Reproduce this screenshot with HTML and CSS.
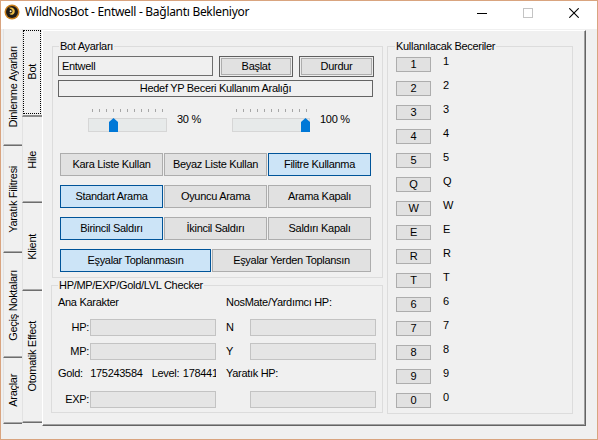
FILE: index.html
```html
<!DOCTYPE html>
<html lang="tr">
<head>
<meta charset="utf-8">
<title>WildNosBot</title>
<link rel="stylesheet" href="styles.css">
</head>
<body>
<div class="window">
  <header class="titlebar">
    <svg class="app-icon" viewBox="0 0 16 16" width="16" height="16">
      <circle cx="8" cy="8" r="7.5" fill="#c9801f"/>
      <circle cx="8" cy="8" r="6" fill="#1f1b17"/>
      <path d="M5 3.8 C8.5 2.8 11.6 5.2 10.6 8.4 C9.6 11.4 6.2 11.6 5.4 9.2 C7.2 10.2 9.2 8.4 8.3 6.3 C7.8 5.2 6.3 4.8 5 3.8Z" fill="#f0bf45"/>
      <circle cx="6.6" cy="7.2" r="1" fill="#fff3c8"/>
    </svg>
    <span class="title">WildNosBot - Entwell - Bağlantı Bekleniyor</span>
    <div class="caption">
      <span class="cap"><svg width="10" height="10" viewBox="0 0 10 10"><path d="M0 5.5H10" stroke="#000" stroke-width="1"/></svg></span>
      <span class="cap"><svg width="10" height="10" viewBox="0 0 10 10"><rect x="0.5" y="0.5" width="9" height="9" fill="none" stroke="#c4c4c4" stroke-width="1"/></svg></span>
      <span class="cap"><svg width="10" height="10" viewBox="0 0 10 10"><path d="M0.3 0.3L9.7 9.7M9.7 0.3L0.3 9.7" stroke="#000" stroke-width="1.1"/></svg></span>
    </div>
  </header>

  <div class="client">
    <nav class="tabstrip">
      <div class="tabcol outer">
        <div class="tab t-dinlenme"><span class="tab-label">Dinlenme Ayarları</span></div>
        <div class="tab t-yaratik"><span class="tab-label">Yaratık Filitresi</span></div>
        <div class="tab t-gecis"><span class="tab-label">Geçiş Noktaları</span></div>
        <div class="tab t-araclar"><span class="tab-label">Araçlar</span></div>
      </div>
      <div class="tabcol inner">
        <div class="tab active t-bot"><div class="focus"><span class="tab-label">Bot</span></div></div>
        <div class="tab t-hile"><span class="tab-label">Hile</span></div>
        <div class="tab t-klient"><span class="tab-label">Klient</span></div>
        <div class="tab t-oto"><span class="tab-label">Otomatik Effect</span></div>
      </div>
    </nav>

    <main class="panel">
      <div class="leftcol">
        <section class="group bot">
          <span class="gtitle">Bot Ayarları</span>
          <div class="row1">
            <div class="textbox">Entwell</div>
            <div class="btn btn-strong btn-start">Başlat</div>
            <div class="btn btn-strong btn-stop">Durdur</div>
          </div>
          <div class="range-label">Hedef YP Beceri Kullanım Aralığı</div>
          <div class="sliders">
            <div class="slider">
              <div class="slider-body">
                <div class="ticks"><i></i><i></i><i></i><i></i><i></i><i></i><i></i><i></i><i></i><i></i><i></i></div>
                <div class="track"><svg class="thumb" style="left:20px" viewBox="0 0 9 14" width="9" height="14"><path d="M0 4L4.5 0L9 4V14H0Z" fill="#0078d7"/></svg></div>
              </div>
              <span class="slider-value">30 %</span>
            </div>
            <div class="slider second">
              <div class="slider-body">
                <div class="ticks"><i></i><i></i><i></i><i></i><i></i><i></i><i></i><i></i><i></i><i></i><i></i></div>
                <div class="track"><svg class="thumb" style="left:68px" viewBox="0 0 9 14" width="9" height="14"><path d="M0 4L4.5 0L9 4V14H0Z" fill="#0078d7"/></svg></div>
              </div>
              <span class="slider-value">100 %</span>
            </div>
          </div>
          <div class="choices">
            <div class="choice-row">
              <div class="btn choice">Kara Liste Kullan</div>
              <div class="btn choice">Beyaz Liste Kullan</div>
              <div class="btn choice on">Filitre Kullanma</div>
            </div>
            <div class="choice-row">
              <div class="btn choice on">Standart Arama</div>
              <div class="btn choice">Oyuncu Arama</div>
              <div class="btn choice">Arama Kapalı</div>
            </div>
            <div class="choice-row">
              <div class="btn choice on">Birincil Saldırı</div>
              <div class="btn choice">İkincil Saldırı</div>
              <div class="btn choice">Saldırı Kapalı</div>
            </div>
            <div class="choice-row">
              <div class="btn choice wide-a on">Eşyalar Toplanmasın</div>
              <div class="btn choice wide-b">Eşyalar Yerden Toplansın</div>
            </div>
          </div>
        </section>

        <section class="group hp">
          <span class="gtitle">HP/MP/EXP/Gold/LVL Checker</span>
          <div class="checker">
            <div class="ccol left">
              <div class="cline">Ana Karakter</div>
              <div class="cfield f1"><span class="clabel">HP:</span><span class="ctext"></span></div>
              <div class="cfield f2"><span class="clabel">MP:</span><span class="ctext"></span></div>
              <div class="cline gold"><span class="g-lbl">Gold:</span><span class="g-val">175243584</span><span class="l-lbl">Level:</span><span class="l-val">178441</span></div>
              <div class="cfield f3"><span class="clabel">EXP:</span><span class="ctext"></span></div>
            </div>
            <div class="ccol right">
              <div class="cline">NosMate/Yardımcı HP:</div>
              <div class="cfield f1"><span class="clabel r">N</span><span class="ctext"></span></div>
              <div class="cfield f2"><span class="clabel r">Y</span><span class="ctext"></span></div>
              <div class="cline gold">Yaratık HP:</div>
              <div class="cfield f3"><span class="clabel r"></span><span class="ctext"></span></div>
            </div>
          </div>
        </section>
      </div>

      <section class="group skills">
        <span class="gtitle">Kullanılacak Beceriler</span>
        <div class="skills-list">
          <div class="skill"><span class="btn skey">1</span><span class="sname">1</span></div>
          <div class="skill"><span class="btn skey">2</span><span class="sname">2</span></div>
          <div class="skill"><span class="btn skey">3</span><span class="sname">3</span></div>
          <div class="skill"><span class="btn skey">4</span><span class="sname">4</span></div>
          <div class="skill"><span class="btn skey">5</span><span class="sname">5</span></div>
          <div class="skill"><span class="btn skey">Q</span><span class="sname">Q</span></div>
          <div class="skill"><span class="btn skey">W</span><span class="sname">W</span></div>
          <div class="skill"><span class="btn skey">E</span><span class="sname">E</span></div>
          <div class="skill"><span class="btn skey">R</span><span class="sname">R</span></div>
          <div class="skill"><span class="btn skey">T</span><span class="sname">T</span></div>
          <div class="skill"><span class="btn skey">6</span><span class="sname">6</span></div>
          <div class="skill"><span class="btn skey">7</span><span class="sname">7</span></div>
          <div class="skill"><span class="btn skey">8</span><span class="sname">8</span></div>
          <div class="skill"><span class="btn skey">9</span><span class="sname">9</span></div>
          <div class="skill"><span class="btn skey">0</span><span class="sname">0</span></div>
        </div>
      </section>
    </main>
  </div>
</div>
</body>
</html>
```

FILE: styles.css
```css
* { box-sizing: border-box; }
html, body { margin: 0; padding: 0; }
body {
  width: 598px;
  height: 440px;
  overflow: hidden;
  background: #f0f0f0;
  font-family: "Liberation Sans", Arial, sans-serif;
  font-size: 11px;
  line-height: 13px;
  letter-spacing: -0.3px;
  color: #000;
}

.window {
  width: 598px;
  height: 440px;
  border: 1px solid #d9a47f;
  display: flex;
  flex-direction: column;
  background: #f0f0f0;
}

/* title bar */
.titlebar {
  height: 28px;
  flex-shrink: 0;
  background: #fff;
  display: flex;
  align-items: flex-start;
}
.app-icon { margin: 3px 0 0 3px; flex-shrink: 0; }
.title {
  margin: 3px 0 0 5px;
  font-family: "Noto Sans", "Open Sans", sans-serif;
  font-size: 12px;
  line-height: 16px;
  letter-spacing: -0.3px;
  white-space: nowrap;
}
.caption { margin-left: auto; display: flex; }
.cap {
  width: 46px;
  height: 28px;
  display: flex;
  justify-content: center;
  align-items: flex-start;
  padding-top: 7px;
}

/* client */
.client { flex: 1; display: flex; min-height: 0; }

.tabstrip { display: flex; padding-left: 2px; }
.tabcol { display: flex; flex-direction: column; }
.tabcol.outer { width: 19px; }
.tabcol.inner { width: 20px; }

.tab {
  display: flex;
  align-items: center;
  justify-content: center;
  border-left: 1px solid #e2e2e2;
  border-bottom: 1px solid #6d6d6d;
  box-shadow: inset 0 -1px 0 #a8a8a8;
  flex-shrink: 0;
}
.tab-label {
  writing-mode: vertical-rl;
  transform: rotate(180deg);
  white-space: nowrap;
}
.t-dinlenme { height: 117px; }
.t-yaratik { height: 107px; }
.t-gecis { height: 105px; }
.t-araclar { height: 66px; }
.t-bot { height: 88px; }
.t-hile { height: 86px; }
.t-klient { height: 88px; }
.t-oto { height: 132px; }

.tab.active {
  padding: 1px 1px 1px 0;
  align-items: stretch;
  box-shadow: none;
  border-bottom: 2px solid #8a8a8a;
}
.focus {
  flex: 1;
  border: 1px dotted #000;
  display: flex;
  align-items: center;
  justify-content: center;
}

.panel {
  margin-top: 1px;
  width: 544px;
  height: 396px;
  border-top: 1px solid #fff;
  border-left: 1px solid #fff;
  border-right: 1px solid #646464;
  border-bottom: 1px solid #646464;
  box-shadow: inset -1px -1px 0 #a0a0a0;
  display: flex;
  align-items: flex-start;
  padding: 15px 0 0 8px;
}

.leftcol { display: flex; flex-direction: column; width: 332px; }

.group { border: 1px solid #dcdcdc; }
.gtitle {
  display: block;
  width: max-content;
  height: 13px;
  margin: -7px 0 0 6px;
  padding: 0 1px;
  background: #f0f0f0;
  white-space: nowrap;
}
.group.bot { margin-left: 1px; width: 331px; height: 232px; }
.group.hp { margin-top: 7px; width: 332px; height: 128px; }
.group.skills { margin-left: 4px; width: 186px; height: 368px; }
.group.skills .gtitle { margin-left: 7px; }

/* generic button */
.btn {
  background: #e1e1e1;
  border: 1px solid #adadad;
  display: flex;
  align-items: center;
  justify-content: center;
  white-space: nowrap;
}

/* bot settings */
.row1 { display: flex; height: 21px; margin: 3px 0 0 5px; }
.textbox {
  width: 155px;
  height: 20px;
  border: 1px solid #6e6e6e;
  background: #f0f0f0;
  padding-left: 3px;
  line-height: 18px;
}
.btn-strong {
  margin-left: 6px;
  height: 21px;
  border-color: #5e5e5e;
  box-shadow: inset 0 0 0 1px #ececec, inset 0 0 0 2px #adadad;
}
.btn-start { width: 74px; }
.btn-stop { width: 75px; }

.range-label {
  margin: 3px 0 0 5px;
  width: 315px;
  height: 17px;
  border: 1px solid #646464;
  text-align: center;
  line-height: 15px;
}

.sliders { display: flex; margin: 12px 0 0 35px; }
.slider { display: flex; }
.slider-body { display: flex; flex-direction: column; }
.ticks { display: flex; gap: 6px; padding-left: 4px; height: 3px; }
.ticks i { display: block; width: 1px; height: 3px; background: #a6a6a6; }
.track {
  position: relative;
  margin-top: 6px;
  width: 79px;
  height: 14px;
  background: #e7eaea;
  border: 1px solid #d6d6d6;
}
.slider.second .track { width: 78px; }
.thumb { position: absolute; top: -1px; display: block; }
.slider-value { margin: 4px 0 0 10px; width: 55px; white-space: nowrap; }

.choices { display: flex; flex-direction: column; gap: 9px; margin: 21px 0 0 7px; }
.choice-row { display: flex; gap: 1px; height: 23px; }
.choice { width: 103px; height: 23px; }
.choice.wide-a { width: 151px; }
.choice.wide-b { width: 159px; }
.choice.on { background: #cce4f7; border-color: #005499; }

/* checker */
.checker { display: flex; gap: 10px; padding-left: 6px; margin-top: 4px; }
.ccol { display: flex; flex-direction: column; }
.ccol.left { width: 158px; }
.ccol.right { width: 150px; }
.cline { height: 13px; white-space: nowrap; }
.cline.gold { margin-top: 7px; display: flex; }
.cfield { display: flex; height: 17px; }
.cfield.f1 { margin-top: 10px; }
.cfield.f2 { margin-top: 7px; }
.cfield.f3 { margin-top: 11px; }
.clabel { width: 32px; text-align: right; padding-right: 1px; line-height: 17px; }
.clabel.r { width: 24px; text-align: left; padding-right: 0; }
.ctext {
  width: 126px;
  height: 17px;
  background: #e5e5e5;
  border: 1px solid #c3c3c3;
}
.g-lbl { width: 33px; }
.g-val { width: 63px; }
.l-lbl { width: 32px; }
.l-val { width: 34px; overflow: hidden; white-space: nowrap; }

/* skills */
.skills-list { display: flex; flex-direction: column; gap: 9px; margin: 4px 0 0 8px; }
.skill { display: flex; height: 15px; }
.skey { width: 35px; height: 15px; line-height: 13px; flex-shrink: 0; }
.sname { margin: -2px 0 0 12px; }
```
